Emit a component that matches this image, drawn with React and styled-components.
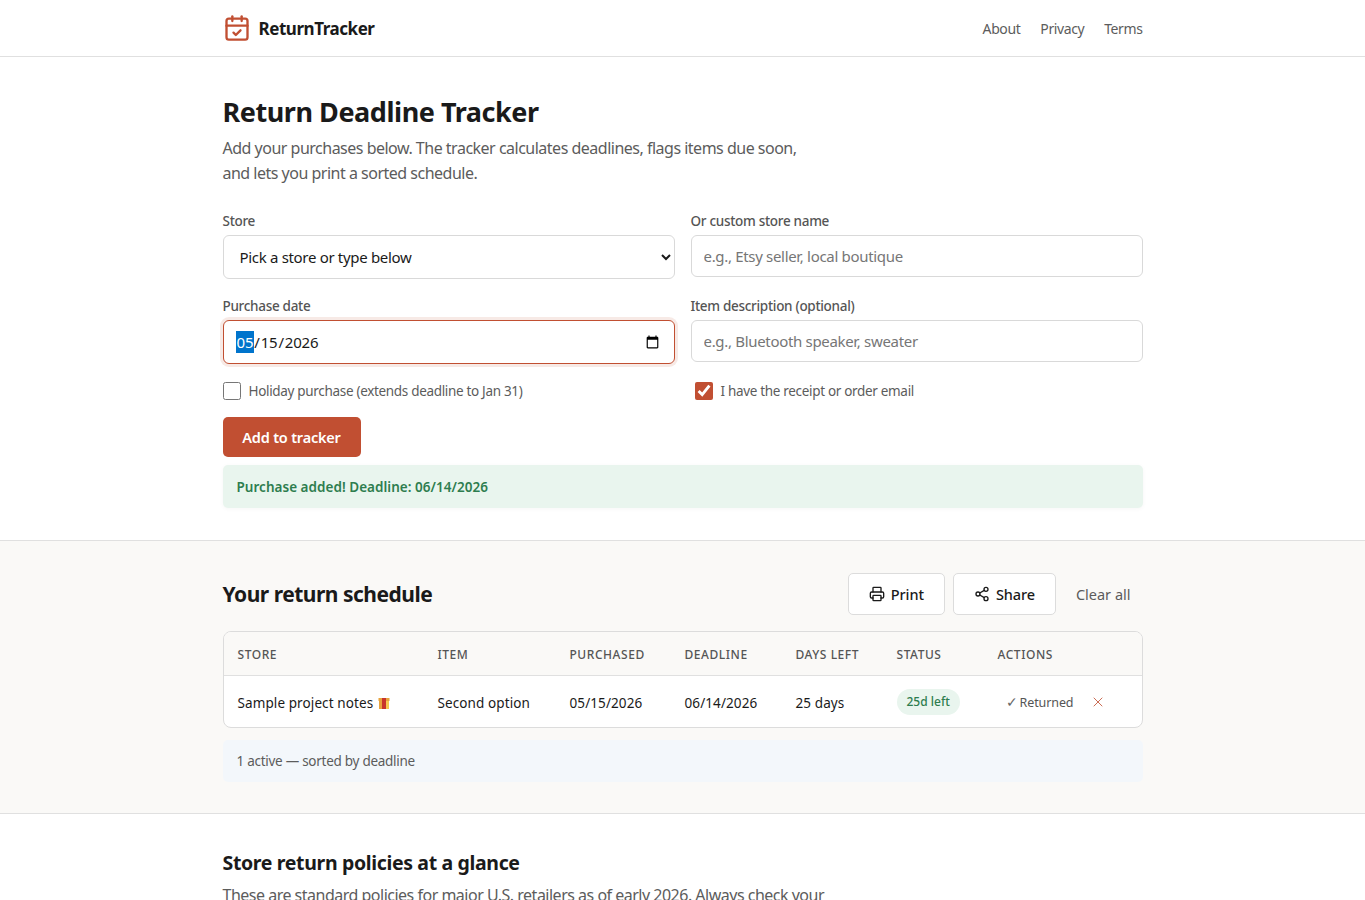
import React from "react";
import styled, { createGlobalStyle } from "styled-components";
import { CalendarCheck, Printer, Share2, X } from "lucide-react";

const GlobalStyle = createGlobalStyle`
  * { box-sizing: border-box; }
  body {
    margin: 0;
    background: #fff;
    color: #1a1a1a;
    font-family: "Noto Sans", "Open Sans", sans-serif;
    font-size: 16px;
  }
`;

const accent = "#c14f32";

const Header = styled.header`
  height: 57px;
  border-bottom: 1px solid #e0e0e0;
`;

const Wrap = styled.div`
  width: 920px;
  margin: 0 auto;
`;

const HeaderInner = styled(Wrap)`
  height: 56px;
  display: flex;
  align-items: center;
  justify-content: space-between;
`;

const Logo = styled.a`
  display: flex;
  align-items: center;
  gap: 8px;
  font-size: 17px;
  font-weight: 700;
  letter-spacing: -0.45px;
  color: #1a1a1a;
  svg { color: ${accent}; }
`;

const Nav = styled.nav`
  display: flex;
  gap: 20px;
  a {
    font-size: 14px;
    letter-spacing: -0.4px;
    color: #5c5c5c;
  }
`;

const Section = styled.section`
  padding: ${(p) => p.$pad};
  background: ${(p) => p.$bg || "#fff"};
  border-bottom: ${(p) => (p.$line ? "1px solid #e0e0e0" : "none")};
`;

const Title = styled.h1`
  margin: 0 0 6px;
  font-size: 27px;
  line-height: 36px;
  font-weight: 700;
  letter-spacing: -0.45px;
`;

const Lead = styled.p`
  margin: 0;
  max-width: 602px;
  font-size: 16px;
  line-height: 25px;
  letter-spacing: -0.5px;
  color: #5c5c5c;
`;

const FormGrid = styled.div`
  margin-top: 25px;
  display: grid;
  grid-template-columns: 452px 452px;
  column-gap: 16px;
  row-gap: 17px;
  align-items: start;
`;

const Field = styled.label`
  display: block;
`;

const FieldLabel = styled.span`
  display: block;
  margin-bottom: 4px;
  font-size: 13.5px;
  line-height: 20px;
  font-weight: 500;
  letter-spacing: -0.3px;
  color: #555;
`;

const control = `
  display: block;
  width: 100%;
  background: #fff;
  border: 1px solid #d9d9d9;
  border-radius: 6px;
  font-family: "Noto Sans", "Open Sans", sans-serif;
  font-size: 15px;
  letter-spacing: -0.32px;
  color: #1a1a1a;
  outline: none;
`;

const Select = styled.select`
  ${control}
  height: 44px;
  padding: 0 12px;
`;

const TextInput = styled.input`
  ${control}
  height: 42px;
  padding: 0 12px;
  &::placeholder { color: #767676; }
`;

const DateInput = styled.input`
  ${control}
  height: 44px;
  padding: 0 12px;
  letter-spacing: -0.2px;
  &:focus {
    border-color: ${accent};
    box-shadow: 0 0 0 3px rgba(193, 79, 50, 0.12);
  }
  &:focus::-webkit-datetime-edit-month-field {
    background-color: #0074cc;
    color: #fff;
  }
`;

const Check = styled.label`
  display: flex;
  align-items: center;
  gap: 8px;
  height: 20px;
  padding-left: ${(p) => (p.$indent ? "4px" : "0")};
  font-size: 13.5px;
  letter-spacing: -0.32px;
  color: #5c5c5c;
  input {
    width: 18px;
    height: 18px;
    margin: 0;
    accent-color: ${accent};
  }
`;

const AddButton = styled.button`
  display: block;
  margin-top: 16px;
  width: 138px;
  height: 40px;
  background: ${accent};
  border: 0;
  border-radius: 5px;
  font-family: inherit;
  font-size: 14.5px;
  font-weight: 600;
  letter-spacing: -0.2px;
  color: #fff;
`;

const Success = styled.div`
  margin-top: 8px;
  padding: 0 14px;
  height: 43px;
  display: flex;
  align-items: center;
  background: #e9f5ee;
  border-radius: 5px;
  box-shadow: 0 1px 4px rgba(0, 0, 0, 0.04);
  font-size: 13.5px;
  font-weight: 600;
  letter-spacing: 0.03px;
  color: #2e7d4f;
`;

const ScheduleHead = styled.div`
  display: flex;
  align-items: center;
  justify-content: space-between;
`;

const ScheduleTitle = styled.h2`
  margin: 0;
  font-size: 21px;
  font-weight: 700;
  letter-spacing: -0.5px;
`;

const Actions = styled.div`
  display: flex;
  align-items: center;
  gap: 8px;
`;

const OutlineButton = styled.button`
  display: inline-flex;
  align-items: center;
  gap: 6px;
  height: 42px;
  padding: 0 20px;
  background: #fff;
  border: 1px solid #dcdcdc;
  border-radius: 5px;
  font-family: inherit;
  font-size: 14.5px;
  font-weight: 500;
  letter-spacing: -0.1px;
  color: #1a1a1a;
`;

const GhostButton = styled.button`
  height: 42px;
  padding: 0 12px;
  background: transparent;
  border: 0;
  font-family: inherit;
  font-size: 14.5px;
  color: #5c5c5c;
`;

const TableBox = styled.div`
  margin-top: 16px;
  background: #fff;
  border: 1px solid #dcdcdc;
  border-radius: 8px;
  overflow: hidden;
`;

const Table = styled.table`
  width: 100%;
  table-layout: fixed;
  border-collapse: collapse;
`;

const Th = styled.th`
  height: 43px;
  padding: 2px 0 0 14px;
  background: #faf9f7;
  border-bottom: 1px solid #e0e0e0;
  text-align: left;
  font-size: 12px;
  font-weight: 500;
  letter-spacing: 0.55px;
  color: #555;
`;

const Td = styled.td`
  height: 52px;
  padding: 3px 0 0 14px;
  font-size: 13.5px;
  letter-spacing: 0.1px;
  color: #1a1a1a;
`;

const GiftIcon = styled.svg`
  margin-left: 5px;
  vertical-align: -2px;
`;

const Badge = styled.span`
  display: inline-block;
  margin-top: -1px;
  padding: 4px 10px 5px;
  background: #e9f5ee;
  border-radius: 13px;
  font-size: 12px;
  font-weight: 500;
  letter-spacing: 0;
  color: #2e7d4f;
`;

const RowActions = styled.div`
  display: flex;
  align-items: center;
  gap: 17px;
  padding-left: 8px;
`;

const ReturnedButton = styled.button`
  padding: 0;
  background: none;
  border: 0;
  font-family: inherit;
  font-size: 12.5px;
  letter-spacing: -0.1px;
  color: #555;
`;

const CheckMark = styled.span`
  margin-right: -1px;
  font-size: 14px;
  line-height: 1;
  color: #666;
`;

const DeleteButton = styled.button`
  display: flex;
  margin-top: -2px;
  padding: 0;
  background: none;
  border: 0;
  color: ${accent};
`;

const Summary = styled.div`
  margin-top: 12px;
  padding: 0 14px;
  height: 42px;
  display: flex;
  align-items: center;
  background: #f3f7fb;
  border-radius: 5px;
  font-size: 13.5px;
  letter-spacing: -0.27px;
  color: #5c5c5c;
`;

const PolicyTitle = styled.h2`
  margin: 0 0 6px;
  font-size: 19.5px;
  line-height: 28px;
  font-weight: 700;
  letter-spacing: -0.35px;
`;

const columns = [
  { label: "Store", width: 200 },
  { label: "Item", width: 132 },
  { label: "Purchased", width: 115 },
  { label: "Deadline", width: 111 },
  { label: "Days left", width: 101 },
  { label: "Status", width: 101 },
  { label: "Actions", width: 158 },
];

export default function App() {
  return (
    <>
      <GlobalStyle />
      <Header>
        <HeaderInner>
          <Logo>
            <CalendarCheck size={28} strokeWidth={2} />
            ReturnTracker
          </Logo>
          <Nav>
            <a>About</a>
            <a>Privacy</a>
            <a>Terms</a>
          </Nav>
        </HeaderInner>
      </Header>

      <Section $pad="37px 0 32px" $line>
        <Wrap>
          <Title>Return Deadline Tracker</Title>
          <Lead>
            Add your purchases below. The tracker calculates deadlines, flags items due soon, and
            lets you print a sorted schedule.
          </Lead>
          <FormGrid>
            <Field>
              <FieldLabel>Store</FieldLabel>
              <Select defaultValue="">
                <option value="">Pick a store or type below</option>
              </Select>
            </Field>
            <Field>
              <FieldLabel>Or custom store name</FieldLabel>
              <TextInput placeholder="e.g., Etsy seller, local boutique" />
            </Field>
            <Field>
              <FieldLabel>Purchase date</FieldLabel>
              <DateInput type="date" defaultValue="2026-05-15" autoFocus />
            </Field>
            <Field>
              <FieldLabel>Item description (optional)</FieldLabel>
              <TextInput placeholder="e.g., Bluetooth speaker, sweater" />
            </Field>
            <Check>
              <input type="checkbox" />
              Holiday purchase (extends deadline to Jan 31)
            </Check>
            <Check $indent>
              <input type="checkbox" defaultChecked />
              I have the receipt or order email
            </Check>
          </FormGrid>
          <AddButton>Add to tracker</AddButton>
          <Success>Purchase added! Deadline: 06/14/2026</Success>
        </Wrap>
      </Section>

      <Section $pad="32px 0 31px" $bg="#faf9f7" $line>
        <Wrap>
          <ScheduleHead>
            <ScheduleTitle>Your return schedule</ScheduleTitle>
            <Actions>
              <OutlineButton>
                <Printer size={16} />
                Print
              </OutlineButton>
              <OutlineButton>
                <Share2 size={16} />
                Share
              </OutlineButton>
              <GhostButton>Clear all</GhostButton>
            </Actions>
          </ScheduleHead>
          <TableBox>
            <Table>
              <colgroup>
                {columns.map((c) => (
                  <col key={c.label} width={c.width} />
                ))}
              </colgroup>
              <thead>
                <tr>
                  {columns.map((c) => (
                    <Th key={c.label}>{c.label.toUpperCase()}</Th>
                  ))}
                </tr>
              </thead>
              <tbody>
                <tr>
                  <Td>
                    Sample project notes
                    <GiftIcon width="12" height="13" viewBox="0 0 12 13">
                      <rect x="0.5" y="1" width="11" height="3" fill="#e8a33d" />
                      <rect x="1" y="4" width="4" height="8" fill="#e8a33d" />
                      <rect x="7" y="4" width="4" height="8" fill="#f5c94f" />
                      <rect x="4" y="1" width="4" height="11" fill="#c8352b" />
                    </GiftIcon>
                  </Td>
                  <Td>Second option</Td>
                  <Td>05/15/2026</Td>
                  <Td>06/14/2026</Td>
                  <Td>25 days</Td>
                  <Td>
                    <Badge>25d left</Badge>
                  </Td>
                  <Td>
                    <RowActions>
                      <ReturnedButton>
                        <CheckMark>✓</CheckMark> Returned
                      </ReturnedButton>
                      <DeleteButton>
                        <X size={16} strokeWidth={1.25} />
                      </DeleteButton>
                    </RowActions>
                  </Td>
                </tr>
              </tbody>
            </Table>
          </TableBox>
          <Summary>1 active — sorted by deadline</Summary>
        </Wrap>
      </Section>

      <Section $pad="35px 0 40px">
        <Wrap>
          <PolicyTitle>Store return policies at a glance</PolicyTitle>
          <Lead>
            These are standard policies for major U.S. retailers as of early 2026. Always check your
            receipt or the store's website for exceptions.
          </Lead>
        </Wrap>
      </Section>
    </>
  );
}
